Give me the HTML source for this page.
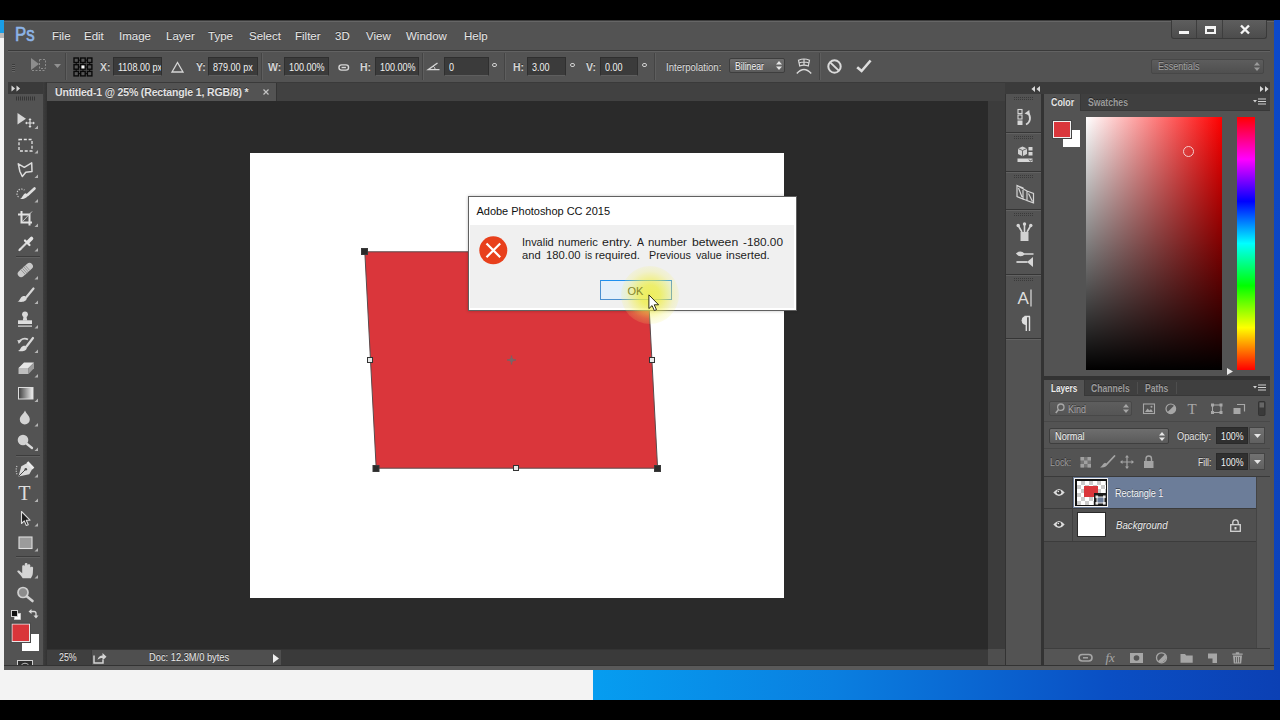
<!DOCTYPE html>
<html>
<head>
<meta charset="utf-8">
<title>Photoshop</title>
<style>
*{box-sizing:border-box;margin:0;padding:0}
html,body{width:1280px;height:720px;overflow:hidden;background:#000}
body{font-family:"Liberation Sans",sans-serif;font-size:11px;color:#e4e4e4;position:relative}
.a{position:absolute}
.t{position:absolute;white-space:nowrap;line-height:14px;text-shadow:0 -1px 0 rgba(0,0,0,.45)}
.mi{font-size:11.5px;color:#e8e8e8}
.ol{font-size:10.5px;font-weight:bold;color:#d4d4d4}
.deg{position:absolute;top:62.5px;width:4.6px;height:4.6px;border:1.2px solid #cfcfcf;border-radius:50%}
.dd{background:linear-gradient(#6e6e6e,#5a5a5a);border:1px solid #3e3e3e;border-radius:2px}
.fs{display:inline-block;transform:scaleX(.86);transform-origin:0 50%}
.fld{position:absolute;background:#3b3b3b;border:1px solid #2f2f2f;border-bottom-color:#5e5e5e;height:19px;top:57px;color:#f0f0f0;line-height:18px;padding-left:4px;font-size:10.5px;white-space:nowrap;overflow:hidden}
.sep{position:absolute;top:53px;width:2px;height:27px;border-left:1px solid #444;border-right:1px solid #5e5e5e}
svg{position:absolute;overflow:visible}
</style>
</head>
<body>
<!-- desktop strips -->
<div class="a" style="left:0;top:20px;width:1280px;height:680px;background:#f3f3f3"></div>
<div class="a" style="left:0;top:20px;width:5px;height:13px;background:#1a9ee6"></div>
<div class="a" style="left:0;top:33px;width:5px;height:5px;background:#b9b9b9"></div>
<div class="a" style="left:593px;top:660px;width:687px;height:40px;background:linear-gradient(90deg,#069df0 0%,#0a7fe0 35%,#0a4fc4 75%,#0b40b4 100%)"></div>
<div class="a" style="left:1272px;top:20px;width:8px;height:650px;background:linear-gradient(#0c49ca,#0b41b8)"></div>

<!-- PS window -->
<div id="ps" class="a" style="left:4px;top:20px;width:1270px;height:650px;background:#535353"></div>

<!-- menu bar -->
<div id="menubar" class="a" style="left:4px;top:20px;width:1270px;height:30px;background:#535353"></div>
<div class="a" style="left:8px;top:50px;width:1262px;height:1px;background:#3a3a3a"></div>
<div class="a" style="left:8px;top:51px;width:1262px;height:1px;background:#626262"></div>

<div class="a" style="left:4px;top:20px;width:1270px;height:1px;background:#3c3c3c"></div>
<div class="a" style="left:4px;top:21px;width:1270px;height:1px;background:#666"></div>
<!-- menu items -->
<div class="t" style="left:14.500px;top:23px;font-size:19.500px;line-height:22px;color:#8db5e8;transform:scaleX(.86);transform-origin:0 0;-webkit-text-stroke:0.600px #8db5e8;text-shadow:none">Ps</div>
<div class="t mi" style="left:52px;top:29px">File</div>
<div class="t mi" style="left:84px;top:29px">Edit</div>
<div class="t mi" style="left:119px;top:29px">Image</div>
<div class="t mi" style="left:166px;top:29px">Layer</div>
<div class="t mi" style="left:208px;top:29px">Type</div>
<div class="t mi" style="left:249px;top:29px">Select</div>
<div class="t mi" style="left:295px;top:29px">Filter</div>
<div class="t mi" style="left:335px;top:29px">3D</div>
<div class="t mi" style="left:366px;top:29px">View</div>
<div class="t mi" style="left:406px;top:29px">Window</div>
<div class="t mi" style="left:464px;top:29px">Help</div>
<!-- window controls -->
<div class="a" style="left:1171px;top:20px;width:96px;height:19px;background:linear-gradient(#5e5e5e,#4c4c4c);border:1px solid #3a3a3a;border-top:none;border-radius:0 0 3px 3px"></div>
<div class="a" style="left:1196px;top:20px;width:1px;height:18px;background:#3e3e3e"></div>
<div class="a" style="left:1222px;top:20px;width:1px;height:18px;background:#3e3e3e"></div>
<div class="a" style="left:1179px;top:31px;width:10px;height:3px;background:#f4f4f4"></div>
<div class="a" style="left:1205px;top:26px;width:11px;height:8px;border:2px solid #f4f4f4;border-top-width:3px"></div>
<svg style="left:1240px;top:25px" width="10" height="9" viewBox="0 0 10 9"><path d="M1 0.5 L9 8.5 M9 0.5 L1 8.5" stroke="#f4f4f4" stroke-width="2.4"/></svg>

<!-- options bar -->
<div id="optbar" class="a" style="left:8px;top:52px;width:1262px;height:30px;background:#535353"></div>

<!-- options bar contents -->
<div class="a" style="left:12px;top:64px;width:3px;height:8px;background:repeating-linear-gradient(#3c3c3c 0 1px,#666 1px 2px)"></div>
<!-- tool preset dimmed -->
<svg style="left:30px;top:57px;opacity:.42" width="17" height="15" viewBox="0 0 17 15"><path d="M1 1 L1 13 L9 7 Z" fill="#ddd"/><path d="M9.5 2.5h6v9h-6z" fill="none" stroke="#ddd" stroke-width="1" stroke-dasharray="2 1.5"/><path d="M2 13.5h13" stroke="#ddd" stroke-width="1" stroke-dasharray="2 1.5"/></svg>
<svg style="left:54px;top:64px;opacity:.45" width="7" height="4" viewBox="0 0 7 4"><path d="M0 0h7L3.5 4z" fill="#ddd"/></svg>
<div class="sep" style="left:65px"></div>
<!-- reference point grid -->
<svg style="left:73px;top:57px" width="20" height="20" viewBox="0 0 20 20">
<g fill="#555" stroke="#0a0a0a" stroke-width="1.4">
<rect x="1" y="1" width="4.5" height="4.5"/><rect x="7.7" y="1" width="4.5" height="4.5"/><rect x="14.4" y="1" width="4.5" height="4.5"/>
<rect x="1" y="7.7" width="4.5" height="4.5"/><rect x="7.7" y="7.7" width="4.5" height="4.5" fill="#fff"/><rect x="14.4" y="7.7" width="4.5" height="4.5"/>
<rect x="1" y="14.4" width="4.5" height="4.5"/><rect x="7.7" y="14.4" width="4.5" height="4.5"/><rect x="14.4" y="14.4" width="4.5" height="4.5"/>
</g>
<path d="M5.5 3.2h2.2M12.2 3.2h2.2M5.5 10h2.2M12.2 10h2.2M5.5 16.6h2.2M12.2 16.6h2.2M3.2 5.5v2.2M3.2 12.2v2.2M10 5.5v2.2M10 12.2v2.2M16.6 5.5v2.2M16.6 12.2v2.2" stroke="#0a0a0a" stroke-width="1"/>
</svg>
<div class="t ol" style="left:100px;top:59.7px">X:</div>
<div class="fld" style="left:113px;width:49px"><span class="fs">1108.00 px</span></div>
<svg style="left:171px;top:61px" width="13" height="12" viewBox="0 0 13 12"><path d="M6.5 1.5 L12 11 L1 11 Z" fill="none" stroke="#d6d6d6" stroke-width="1.3"/></svg>
<div class="t ol" style="left:196px;top:59.7px">Y:</div>
<div class="fld" style="left:208px;width:50px"><span class="fs">879.00 px</span></div>
<div class="sep" style="left:261px"></div>
<div class="t ol" style="left:268px;top:59.7px">W:</div>
<div class="fld" style="left:284px;width:45px"><span class="fs">100.00%</span></div>
<svg style="left:337.500px;top:63.500px" width="11.500" height="7" viewBox="0 0 13 8"><rect x="1" y="1" width="11" height="6" rx="3" fill="none" stroke="#d6d6d6" stroke-width="1.6"/><path d="M4 4h5" stroke="#d6d6d6" stroke-width="1.6"/></svg>
<div class="t ol" style="left:360px;top:59.7px">H:</div>
<div class="fld" style="left:375px;width:44px"><span class="fs">100.00%</span></div>
<div class="sep" style="left:422px"></div>
<svg style="left:427px;top:62px" width="13" height="9" viewBox="0 0 13 9"><path d="M10.5 1 L1.2 7.6 L12.5 7.6" fill="none" stroke="#d6d6d6" stroke-width="1.3"/><path d="M6.2 4.2 Q8.2 5.6 8.2 7.6" fill="none" stroke="#d6d6d6" stroke-width="1"/></svg>
<div class="fld" style="left:444px;width:45px"><span class="fs">0</span></div>
<div class="deg" style="left:492px"></div>
<div class="sep" style="left:504px"></div>
<div class="t ol" style="left:513px;top:59.7px">H:</div>
<div class="fld" style="left:527px;width:39px"><span class="fs">3.00</span></div>
<div class="deg" style="left:570px"></div>
<div class="t ol" style="left:586px;top:59.7px">V:</div>
<div class="fld" style="left:600px;width:38px"><span class="fs">0.00</span></div>
<div class="deg" style="left:642px"></div>
<div class="sep" style="left:654px"></div>
<div class="a dd" style="left:729px;top:58px;width:56px;height:15px"></div>
<svg style="left:776px;top:61px" width="6" height="9" viewBox="0 0 6 9"><path d="M0 3.5h6L3 0zM0 5.5h6L3 9z" fill="#e6e6e6"/></svg>
<div class="t" style="left:666.0px;top:59.70px;font-size:10.5px;line-height:14px;transform:scaleX(0.911);transform-origin:0 0;color:#dedede;">Interpolation:</div>
<div class="t" style="left:735.4px;top:59.50px;font-size:10.2px;line-height:14px;transform:scaleX(0.853);transform-origin:0 0;color:#f2f2f2;">Bilinear</div>
<!-- warp icon -->
<svg style="left:796px;top:58px" width="16" height="17" viewBox="0 0 16 17"><g fill="none" stroke="#d9d9d9" stroke-width="1.2"><path d="M2.5 2.2 Q8 -0.2 13.5 2.2 L12.3 8 Q8 6.2 3.7 8 Z"/><path d="M8 1v6M3 5 Q8 3 13 5"/><path d="M0.8 15.5 Q8 7.5 15.2 15.5" stroke-width="1.5"/></g></svg>
<div class="sep" style="left:819px"></div>
<svg style="left:827px;top:59px" width="15" height="15" viewBox="0 0 15 15"><circle cx="7.5" cy="7.5" r="6.2" fill="none" stroke="#dadada" stroke-width="2"/><path d="M3.2 3.4 L11.8 11.6" stroke="#dadada" stroke-width="2"/></svg>
<svg style="left:856px;top:59px" width="16" height="14" viewBox="0 0 16 14"><path d="M1.2 8.2 L5.6 12 L14.6 1.5" fill="none" stroke="#dedede" stroke-width="2.6"/></svg>
<!-- essentials -->
<div class="a" style="left:1151px;top:59px;width:113px;height:15px;background:linear-gradient(#5d5d5d,#4f4f4f);border:1px solid #474747;border-radius:2px"></div>
<div class="t" style="left:1157.5px;top:59.50px;font-size:10.2px;line-height:14px;transform:scaleX(0.894);transform-origin:0 0;color:#a0a0a0;">Essentials</div>
<svg style="left:1254px;top:62px;opacity:.6" width="6" height="9" viewBox="0 0 6 9"><path d="M0 3.5h6L3 0zM0 5.5h6L3 9z" fill="#c8c8c8"/></svg>

<!-- tab bar -->
<div class="a" style="left:47px;top:82px;width:958px;height:19px;background:#414141"></div>
<div class="a" style="left:47px;top:82px;width:230px;height:19px;background:#535353;border-right:1px solid #343434"></div>
<div class="a" style="left:47px;top:82px;width:958px;height:1px;background:#3a3a3a"></div>

<div class="t" id="tabtitle" style="left:55px;top:85px;font-size:10.5px;font-weight:bold;color:#e2e2e2;letter-spacing:-0.15px">Untitled-1 @ 25% (Rectangle 1, RGB/8) *</div>
<svg style="left:263px;top:89px" width="6" height="6" viewBox="0 0 6 6"><path d="M0.5 0.5L5.5 5.5M5.5 0.5L0.5 5.5" stroke="#c4c4c4" stroke-width="1.2"/></svg>

<!-- canvas area -->
<div id="canvasarea" class="a" style="left:47px;top:101px;width:941px;height:548px;background:#2a2a2a"></div>
<div class="a" style="left:988px;top:101px;width:17px;height:548px;background:#3c3c3c"></div>
<div class="a" style="left:988px;top:649px;width:17px;height:17px;background:#4e4e4e"></div>

<!-- document -->
<div class="a" style="left:250px;top:153px;width:534px;height:445px;background:#fff"></div>
<svg id="shape" style="left:0;top:0" width="1280" height="720" viewBox="0 0 1280 720">
<path d="M364.800 251.800L646.200 251.800L657.600 468.200L376.200 468.200Z" fill="#da363b" stroke="#5a4a4c" stroke-width="1"/>
<!-- center crosshair -->
<path d="M507 360h9M511.500 355.500v9" stroke="#7d5e60" stroke-width="1.300"/>
<path d="M511.500 356.800l2.600 3.200-2.600 3.200-2.600-3.200z" fill="#7a6466"/>
<!-- handles -->
<g fill="#2b2b2b" stroke="#3a3a3a" stroke-width="1">
<rect x="361.500" y="248.500" width="6" height="6"/>
<rect x="373" y="465.500" width="6" height="6"/>
<rect x="654.500" y="465.500" width="6" height="6"/>
</g>
<g fill="#e8e8e8" stroke="#333" stroke-width="1">
<rect x="367.500" y="357.500" width="5" height="5"/>
<rect x="649.500" y="357.500" width="5" height="5"/>
<rect x="513.500" y="465.500" width="5" height="5"/>
</g>
</svg>

<!-- dialog -->
<div id="dlg" class="a" style="left:468px;top:196px;width:329px;height:115px;background:#fff;border:1px solid #606060;box-shadow:0 0 3px rgba(0,0,0,.25)">
 <div class="a" style="left:1px;top:28px;width:324px;height:83px;background:#f0f0f0"></div>
</div>
<div class="t" id="dtitle" style="left:476.5px;top:203px;font-size:11px;letter-spacing:-0.02px;line-height:16px;color:#111;text-shadow:none">Adobe Photoshop CC 2015</div>
<svg style="left:479px;top:235.500px" width="29" height="29" viewBox="0 0 29 29"><circle cx="14.300" cy="14.300" r="14" fill="#e8401c"/><path d="M7.500 7.500L21.200 21.200M21.200 7.500L7.500 21.200" stroke="#fff" stroke-width="2.200"/></svg>
<!-- msg -->
<div class="t" style="left:522.0px;top:236.10px;font-size:10.8px;line-height:13.25px;transform:scaleX(1.015);transform-origin:0 0;color:#1c1c1c;text-shadow:none;">Invalid</div>
<div class="t" style="left:557.6px;top:236.10px;font-size:10.8px;line-height:13.25px;transform:scaleX(1.039);transform-origin:0 0;color:#1c1c1c;text-shadow:none;">numeric</div>
<div class="t" style="left:601.9px;top:236.10px;font-size:10.8px;line-height:13.25px;transform:scaleX(1.149);transform-origin:0 0;color:#1c1c1c;text-shadow:none;">entry.</div>
<div class="t" style="left:637.0px;top:236.10px;font-size:10.8px;line-height:13.25px;transform:scaleX(0.972);transform-origin:0 0;color:#1c1c1c;text-shadow:none;">A</div>
<div class="t" style="left:648.1px;top:236.10px;font-size:10.8px;line-height:13.25px;transform:scaleX(1.060);transform-origin:0 0;color:#1c1c1c;text-shadow:none;">number</div>
<div class="t" style="left:691.9px;top:236.10px;font-size:10.8px;line-height:13.25px;transform:scaleX(1.132);transform-origin:0 0;color:#1c1c1c;text-shadow:none;">between</div>
<div class="t" style="left:742.5px;top:236.10px;font-size:10.8px;line-height:13.25px;transform:scaleX(1.092);transform-origin:0 0;color:#1c1c1c;text-shadow:none;">-180.00</div>
<div class="t" style="left:522.0px;top:249.35px;font-size:10.8px;line-height:13.25px;transform:scaleX(1.032);transform-origin:0 0;color:#1c1c1c;text-shadow:none;">and</div>
<div class="t" style="left:546.0px;top:249.35px;font-size:10.8px;line-height:13.25px;transform:scaleX(1.044);transform-origin:0 0;color:#1c1c1c;text-shadow:none;">180.00</div>
<div class="t" style="left:585.0px;top:249.35px;font-size:10.8px;line-height:13.25px;transform:scaleX(0.896);transform-origin:0 0;color:#1c1c1c;text-shadow:none;">is</div>
<div class="t" style="left:595.3px;top:249.35px;font-size:10.8px;line-height:13.25px;transform:scaleX(1.053);transform-origin:0 0;color:#1c1c1c;text-shadow:none;">required.</div>
<div class="t" style="left:648.8px;top:249.35px;font-size:10.8px;line-height:13.25px;transform:scaleX(0.996);transform-origin:0 0;color:#1c1c1c;text-shadow:none;">Previous</div>
<div class="t" style="left:695.6px;top:249.35px;font-size:10.8px;line-height:13.25px;transform:scaleX(0.994);transform-origin:0 0;color:#1c1c1c;text-shadow:none;">value</div>
<div class="t" style="left:725.6px;top:249.35px;font-size:10.8px;line-height:13.25px;transform:scaleX(1.057);transform-origin:0 0;color:#1c1c1c;text-shadow:none;">inserted.</div>
<!-- /msg -->
<div class="a" style="left:600px;top:280px;width:72px;height:20px;background:#e3effa;border:1px solid #4a8fd0;border-top-color:#1e90f0"></div>
<!-- yellow highlight -->
<div class="a" style="left:620.500px;top:265.500px;width:58px;height:58px;border-radius:50%;background:radial-gradient(circle,rgba(240,238,60,.82) 0%,rgba(240,238,64,.76) 24%,rgba(242,240,80,.52) 42%,rgba(244,242,100,.26) 58%,rgba(245,242,120,.1) 75%,rgba(245,242,120,.03) 90%,rgba(245,242,120,0) 100%)"></div>
<div class="t" id="okt" style="left:627.500px;top:283.500px;font-size:11px;line-height:14px;color:#85852a;text-shadow:none">OK</div>
<!-- cursor -->
<svg style="left:648px;top:293.500px" width="11.500" height="17.700" viewBox="0 0 13 20"><path d="M1 1v15.500l3.600-3.400 2.600 5.700 2.400-1.100-2.600-5.500h5z" fill="#fff" stroke="#2a2a10" stroke-width="1.100" stroke-linejoin="round"/></svg>

<!-- status bar -->
<div id="status" class="a" style="left:47px;top:649px;width:941px;height:17px;background:#3a3a3a"></div>
<div class="a" style="left:47px;top:649px;width:44px;height:17px;background:#3f3f3f"></div>
<div class="a" style="left:91px;top:649px;width:190px;height:17px;background:#4f4f4f"></div>

<!-- status contents -->
<div class="t" style="left:58.7px;top:650.50px;font-size:10px;line-height:14px;transform:scaleX(0.884);transform-origin:0 0;color:#e8e8e8;">25%</div>
<div class="t" style="left:148.9px;top:650.50px;font-size:10px;line-height:14px;transform:scaleX(0.930);transform-origin:0 0;color:#e8e8e8;">Doc: 12.3M/0 bytes</div>
<div class="a" style="left:47px;top:649px;width:941px;height:1px;background:#333"></div>
<div class="a" style="left:91px;top:650px;width:1px;height:15px;background:#3a3a3a"></div>
<svg style="left:93px;top:652px" width="14" height="12" viewBox="0 0 14 12"><path d="M1 3.500v7.500h9v-3" fill="none" stroke="#d4d4d4" stroke-width="1.500"/><path d="M4.500 8c0.500-3 2.500-4.500 5-4.500v-2.500l4 3.800-4 3.700v-2.500c-2 0-3.500 0.500-5 2z" fill="#d4d4d4"/></svg>
<svg style="left:272.500px;top:653.500px" width="6" height="9" viewBox="0 0 6 9"><path d="M0 0l6 4.500-6 4.500z" fill="#f0f0f0"/></svg>
<div class="a" style="left:47px;top:649px;width:238px;height:17px;background:transparent"></div>

<!-- toolbar -->
<div id="toolbar" class="a" style="left:8px;top:82px;width:38px;height:584px;background:#535353"></div>
<div class="a" style="left:46px;top:82px;width:1px;height:584px;background:#383838"></div>

<!-- toolbar contents -->
<div class="a" style="left:8px;top:82px;width:36px;height:12px;background:#3a3a3a"></div>
<div class="a" style="left:43px;top:82px;width:4px;height:584px;background:linear-gradient(90deg,#3e3e3e,#333)"></div>
<svg id="tools" style="left:0;top:0" width="1280" height="720" viewBox="0 0 1280 720">
<defs>
<linearGradient id="gg" x1="0" x2="1" y1="0" y2="0"><stop offset="0" stop-color="#3c3c3c"/><stop offset="1" stop-color="#f2f2f2"/></linearGradient>
</defs>
<!-- double arrows -->
<path d="M11.5 85.5l3.6 3-3.6 3zM16.5 85.5l3.6 3-3.6 3z" fill="#d8d8d8"/>
<!-- grip -->
<g stroke="#363636" stroke-width="1"><path d="M16.5 96.5v4M18.5 96.5v4M20.5 96.5v4M22.5 96.5v4M24.5 96.5v4M26.5 96.5v4M28.5 96.5v4M30.5 96.5v4M32.5 96.5v4M34.5 96.5v4"/></g>
<!-- corner triangles -->
<g fill="#b4b4b4">
<path d="M38 125.5v3.5h-3.5z"/><path d="M38 150v3.5h-3.5z"/><path d="M38 174.500v3.500h-3.500z"/><path d="M38 199v3.500h-3.500z"/><path d="M38 223.500v3.500h-3.500z"/><path d="M38 248v3.500h-3.500z"/>
<path d="M38 276v3.500h-3.500z"/><path d="M38 300.500v3.500h-3.500z"/><path d="M38 325v3.500h-3.500z"/><path d="M38 349.500v3.500h-3.500z"/><path d="M38 374v3.500h-3.500z"/><path d="M38 398.500v3.500h-3.500z"/>
<path d="M38 423v3.500h-3.500z"/><path d="M38 447.500v3.500h-3.500z"/><path d="M38 474v3.500h-3.500z"/><path d="M38 498.500v3.500h-3.500z"/><path d="M38 523v3.500h-3.500z"/><path d="M38 548v3.500h-3.500z"/><path d="M38 575v3.500h-3.500z"/>
</g>
<!-- separators -->
<g stroke="#3c3c3c" stroke-width="1"><path d="M16 256.500h24M16 455.500h24M16 556.500h24"/></g>
<g stroke="#606060" stroke-width="1"><path d="M16 257.500h24M16 456.500h24M16 557.500h24"/></g>
<!-- 1 move -->
<path d="M17.500 113v11.500l8.500-5.700z" fill="#d6d6d6"/>
<path d="M26 123h8M30 119v8" stroke="#e0e0e0" stroke-width="1.200"/>
<path d="M30 118l1.600 2h-3.200zM30 128l1.600-2h-3.200zM25 123l2-1.600v3.200zM35 123l-2-1.600v3.200z" fill="#e0e0e0"/>
<!-- 2 marquee -->
<rect x="19" y="139.500" width="13" height="11.500" fill="none" stroke="#e4e4e4" stroke-width="1.300" stroke-dasharray="3 1.800"/>
<!-- 3 poly lasso -->
<path d="M18.300 163.800L24.300 167.300L31.700 162.800L32 171.500L25.800 172.200L22.300 176.500L19.800 171.200Z" fill="none" stroke="#dcdcdc" stroke-width="1.500" stroke-linejoin="round"/>
<!-- 4 quick select -->
<path d="M34.500 188.500L27.500 195" stroke="#dedede" stroke-width="2.600" stroke-linecap="round"/>
<path d="M28 194.500c-0.500 3-3.500 5-8 4.500c2.500-1 2.500-4.500 5.500-5.800z" fill="#e0e0e0"/>
<path d="M18.500 197a4.500 4.500 0 0 1 6-6.800" fill="none" stroke="#d0d0d0" stroke-width="1.100" stroke-dasharray="1.300 1.300"/>
<!-- 5 crop -->
<path d="M21.500 211v11.500H32M18 214.500h11.500V225.500" fill="none" stroke="#e2e2e2" stroke-width="2"/>
<path d="M22.500 221.500L32 211.500" stroke="#cfcfcf" stroke-width="0.900"/>
<!-- 6 eyedropper -->
<path d="M26.500 243L19.500 250" stroke="#d8d8d8" stroke-width="2.200" stroke-linecap="round"/>
<path d="M18.500 251l1.500-3 1.500 1.500z" fill="#e6e6e6"/>
<path d="M25 240.500l4.500 4.500" stroke="#e4e4e4" stroke-width="2.200" stroke-linecap="round"/>
<path d="M28 242L31.500 238.500" stroke="#e4e4e4" stroke-width="3.600" stroke-linecap="round"/>
<!-- 7 healing -->
<g transform="rotate(-42 25.300 270)"><rect x="16.300" y="266.600" width="18" height="6.800" rx="3.400" fill="#c9c9c9"/><path d="M22.300 266.600v6.800M24.300 266.600v6.800M26.300 266.600v6.800M28.300 266.600v6.800" stroke="#8a8a8a" stroke-width="0.800"/></g>
<!-- 8 brush -->
<path d="M33.500 288.500L26.500 297" stroke="#d6d6d6" stroke-width="2.200" stroke-linecap="round"/>
<path d="M26.800 297.800c0.200 3.600-4.300 5-9.300 3.700c2-0.600 2.200-2.200 3.200-3.600c1.300-1.800 3.600-2.400 4.800-1.500z" fill="#dadada"/>
<!-- 9 stamp -->
<circle cx="25" cy="314.300" r="2.900" fill="#dadada"/>
<path d="M23.600 316h2.800l0.800 4.500h-4.400z" fill="#dadada"/>
<rect x="18" y="320.300" width="14" height="3.700" fill="#dedede"/>
<rect x="18" y="325.500" width="14" height="1.200" fill="#dedede"/>
<!-- 10 history brush -->
<path d="M33 338L26.500 346.500" stroke="#d8d8d8" stroke-width="2.200" stroke-linecap="round"/>
<path d="M26.800 347.300c0.200 3.400-4 4.800-8.800 3.600c2-0.600 2.200-2.100 3.100-3.400c1.200-1.700 3.400-2.300 4.500-1.500z" fill="#dcdcdc"/>
<path d="M19 342.500c1-3.500 5.500-5 9-3" fill="none" stroke="#d4d4d4" stroke-width="1.700"/>
<path d="M17.300 340l4.500 0.500-3 3.500z" fill="#d4d4d4"/>
<!-- 11 eraser -->
<path d="M24 362.500h10l-5.500 5.500h-10z" fill="#e6e6e6"/>
<path d="M18.500 368h10v6h-10z" fill="#bdbdbd"/>
<path d="M28.500 368l5.500-5.500v5.800l-5.500 5.700z" fill="#9c9c9c"/>
<!-- 12 gradient -->
<rect x="18.500" y="387.500" width="14.500" height="11.500" fill="url(#gg)" stroke="#dcdcdc" stroke-width="1"/>
<!-- 13 blur drop -->
<path d="M25 410.500c1.500 3.500 4.800 5.500 4.800 9a5 5 0 0 1-10 0c0-3.500 3.700-5.500 5.200-9z" fill="#d4d4d4"/>
<!-- 14 dodge -->
<circle cx="23" cy="440" r="5.300" fill="#d2d2d2"/>
<path d="M27 444L32 448" stroke="#dadada" stroke-width="2.300" stroke-linecap="round"/>
<!-- 15 pen -->
<path d="M18.500 476.500L21.300 466.300L27.300 463L32.500 468.500L29.300 474.300Z" fill="#dcdcdc"/>
<path d="M28.300 461.300l6 6.300-1.800 1.800-6-6.300z" fill="#ececec"/>
<path d="M19 476L25.500 469.500" stroke="#4a4a4a" stroke-width="1"/>
<circle cx="25.800" cy="469.200" r="1.300" fill="#4a4a4a"/>
<path d="M17 466c-1.200 3-1 6 0.300 9" fill="none" stroke="#d0d0d0" stroke-width="1.100" stroke-dasharray="1.200 1.200"/>
<!-- 16 type -->
<text x="18.300" y="500" font-family="Liberation Serif" font-size="20" fill="#dedede">T</text>
<!-- 17 path select -->
<path d="M21.500 511.500v12l2.800-2.600 2 4.600 2-0.800-2-4.500h3.700z" fill="#1c1c1c" stroke="#dadada" stroke-width="1.100" stroke-linejoin="round"/>
<!-- 18 rectangle -->
<rect x="19" y="537" width="13" height="11.500" fill="#9b9b9b" stroke="#dedede" stroke-width="1.100"/>
<!-- 19 hand -->
<path transform="translate(-4.600,0) scale(1.270,1)" d="M21.500 578.300c-1-2.500-3-4.500-4.200-6.500c-0.400-1 0.800-1.800 1.800-0.800l2 2.200v-7c0-1.400 2-1.400 2 0v-2c0-1.500 2.200-1.500 2.200 0v1.200c0-1.500 2.200-1.500 2.200 0v2.200c0.200-1.300 2.200-1.300 2.200 0.200l-0.200 5c0 2.500-1 4-1.500 5.500z" fill="#d4d4d4"/>
<!-- 20 zoom -->
<circle cx="23" cy="592.500" r="5" fill="#8c8c8c" stroke="#cfcfcf" stroke-width="1.700"/>
<path d="M27 596.500L32.500 601" stroke="#d2d2d2" stroke-width="2.600" stroke-linecap="round"/>
<!-- default colors -->
<rect x="14.500" y="613.500" width="6" height="6" fill="#fff" stroke="#d0d0d0" stroke-width="0.800"/>
<rect x="11.500" y="610.500" width="6" height="6" fill="#111" stroke="#d0d0d0" stroke-width="1"/>
<!-- swap -->
<path d="M30.500 611.500h3.500a2 2 0 0 1 2 2v3" fill="none" stroke="#dadada" stroke-width="1.300"/>
<path d="M28.500 611.500l3-2.500v5zM36 618.500l-2.500-3h5z" fill="#dadada"/>
<!-- fg/bg -->
<rect x="22" y="634" width="17" height="17" fill="#ffffff"/>
<rect x="12" y="624" width="17.500" height="17.500" fill="#d9353a" stroke="#e8e8e8" stroke-width="1"/>
<rect x="11" y="623" width="19.500" height="19.500" fill="none" stroke="#4a4a4a" stroke-width="1"/>
<!-- quick mask -->
<rect x="17.500" y="660.500" width="15" height="6" fill="#2e2e2e" stroke="#d0d0d0" stroke-width="1"/>
<path d="M21 665.500c2-3 6-3 8 0" fill="none" stroke="#bdbdbd" stroke-width="1"/>
</svg>

<!-- right icon strip -->
<div class="a" style="left:1005px;top:82px;width:265px;height:12px;background:#3b3b3b"></div>
<div id="ricons" class="a" style="left:1006px;top:94px;width:35px;height:572px;background:#535353"></div>
<div class="a" style="left:1005px;top:94px;width:1px;height:572px;background:#333"></div>
<div class="a" style="left:1041px;top:94px;width:3px;height:572px;background:#333"></div>

<!-- right panels -->
<div id="rpanels" class="a" style="left:1044px;top:94px;width:226px;height:572px;background:#535353"></div>

<!-- right strip icons -->
<svg style="left:0;top:0" width="1280" height="720" viewBox="0 0 1280 720">
<g stroke="#353535" stroke-width="1"><path d="M1006 132.500h35M1006 171.500h35M1006 209.500h35M1006 274.500h35M1006 338.500h35"/></g>
<g stroke="#626262" stroke-width="1"><path d="M1006 133.500h35M1006 172.500h35M1006 210.500h35M1006 275.500h35M1006 339.500h35"/></g>
<path d="M1014 97.5h19M1014 99.5h19" stroke="#3a3a3a" stroke-width="1" stroke-dasharray="1 1"/><path d="M1014 136.5h19M1014 138.5h19" stroke="#3a3a3a" stroke-width="1" stroke-dasharray="1 1"/><path d="M1014 175.5h19M1014 177.5h19" stroke="#3a3a3a" stroke-width="1" stroke-dasharray="1 1"/><path d="M1014 213.5h19M1014 215.5h19" stroke="#3a3a3a" stroke-width="1" stroke-dasharray="1 1"/><path d="M1014 278.5h19M1014 280.5h19" stroke="#3a3a3a" stroke-width="1" stroke-dasharray="1 1"/>
<!-- history -->
<g fill="none" stroke="#d6d6d6" stroke-width="1.100"><rect x="1018" y="109.500" width="4" height="4"/><rect x="1018" y="115" width="4" height="4"/></g>
<rect x="1017.500" y="120.500" width="5" height="4.500" fill="#d6d6d6"/>
<path d="M1026 124.500c4.500-2 5.500-8 1.500-12" fill="none" stroke="#d6d6d6" stroke-width="1.800"/>
<path d="M1024.500 113.500l4.800-3.500 0.500 5.500z" fill="#d6d6d6"/>
<!-- properties/3d -->
<path d="M1022.500 146.500l4.500 2v5.500l-4.500 2.300-4.500-2.300v-5.500z" fill="#d0d0d0"/><path d="M1018 148.500l4.500 2 4.500-2M1022.500 150.500v5.500" stroke="#5a5a5a" stroke-width="0.900" fill="none"/>
<rect x="1028.500" y="147" width="4" height="3.500" fill="#d6d6d6"/><rect x="1028.500" y="152" width="4" height="3.500" fill="#d6d6d6"/>
<rect x="1017.500" y="158.500" width="15" height="3.500" fill="#d6d6d6"/><path d="M1029 159.500l1.500 1.800 1.500-1.800" stroke="#444" stroke-width="0.900" fill="none"/>
<!-- 3d planes -->
<g fill="none" stroke="#d4d4d4" stroke-width="1.200"><path d="M1017 185.500l6 2.500v11l-6-2.500zM1027 191l6.500 2.500v9.500l-6.500-2.500zM1017 185.500l10 5.500M1023 199l10.500 4M1018.500 188l3.500 9M1028.500 193.500l4 8"/></g>
<!-- brush presets -->
<rect x="1020.500" y="232" width="8" height="9" fill="#d2d2d2"/>
<path d="M1022 232l-3.500-6M1024.500 232v-7.500M1027 232l3.500-6" stroke="#d6d6d6" stroke-width="1.600"/>
<circle cx="1018.200" cy="225.500" r="1.700" fill="#d6d6d6"/><circle cx="1024.500" cy="224" r="1.700" fill="#d6d6d6"/><circle cx="1030.800" cy="225.500" r="1.700" fill="#d6d6d6"/>
<!-- brush -->
<path d="M1017 253.500c2-1.500 5-1.500 7 0.500c-2 2.300-5 2-7-0.500zM1024 254h9.500" fill="#d6d6d6" stroke="#d6d6d6" stroke-width="1.500"/>
<path d="M1016.500 262h11" stroke="#d6d6d6" stroke-width="1.800"/><path d="M1027 262l6-5v10z" fill="#d6d6d6"/>
<!-- A| -->
<text x="1017.500" y="304" font-family="Liberation Sans" font-size="17" fill="#dedede">A</text><path d="M1031 289.500v17" stroke="#dedede" stroke-width="1.200"/>
<!-- pilcrow -->
<path d="M1024.500 316.500h5.500M1026.300 316.500v14.500M1029.500 316.500v14.500" stroke="#dedede" stroke-width="1.400" fill="none"/><path d="M1026 316.500a4 4 0 0 0 0 8z" fill="#dedede" stroke="#dedede" stroke-width="1"/>
</svg>

<!-- right panel contents -->
<svg style="left:1030.500px;top:85.500px" width="9" height="6" viewBox="0 0 9 6"><path d="M4 0v6l-3.600-3zM9 0v6l-3.600-3z" fill="#d8d8d8"/></svg>
<svg style="left:1259.500px;top:85.500px" width="9" height="6" viewBox="0 0 9 6"><path d="M0 0v6l3.600-3zM5 0v6l3.600-3z" fill="#d8d8d8"/></svg>
<!-- color panel -->
<div class="a" style="left:1044px;top:94px;width:226px;height:16px;background:#3f3f3f"></div>
<div class="a" style="left:1044px;top:94px;width:37px;height:17px;background:#535353;border-right:1px solid #383838"></div>
<div class="a" style="left:1081px;top:110px;width:189px;height:1px;background:#383838"></div>
<svg style="left:1253px;top:98px" width="13" height="8" viewBox="0 0 13 8"><path d="M0 2h4L2 4.500z" fill="#d0d0d0"/><path d="M5 1h8M5 3.500h8M5 6h8" stroke="#d0d0d0" stroke-width="1.200"/></svg>
<div class="a" style="left:1063px;top:130px;width:17px;height:17px;background:#fff"></div>
<div class="a" style="left:1052px;top:120px;width:20px;height:19px;border:1px solid #444"></div>
<div class="a" style="left:1053px;top:121px;width:18px;height:17px;background:#da363b;border:1px solid #f0f0f0"></div>
<div class="a" style="left:1086px;top:117px;width:136px;height:253px;background:linear-gradient(to top,#000,rgba(0,0,0,0)),linear-gradient(to right,#fff,#ff0000)"></div>
<div class="a" style="left:1237px;top:117px;width:18px;height:253px;background:linear-gradient(#ff0000 0%,#ff00ff 16.7%,#0000ff 33.3%,#00ffff 50%,#00ff00 66.7%,#ffff00 83.3%,#ff0000 100%)"></div>
<div class="a" style="left:1183px;top:146px;width:11px;height:11px;border:1.300px solid #f4d0d0;border-radius:50%"></div>
<svg style="left:1227px;top:368px" width="6" height="7" viewBox="0 0 6 7"><path d="M0 0l6 3.500-6 3.500z" fill="#e8e8e8"/></svg>
<!-- gap -->
<div class="a" style="left:1044px;top:376px;width:226px;height:4px;background:#333"></div>
<!-- layers panel -->
<div class="a" style="left:1044px;top:380px;width:226px;height:15px;background:#3f3f3f"></div>
<div class="a" style="left:1044px;top:380px;width:41px;height:16px;background:#535353;border-right:1px solid #383838"></div>
<div class="a" style="left:1085px;top:395px;width:185px;height:1px;background:#383838"></div>
<div class="a" style="left:1137px;top:382px;width:1px;height:12px;background:#4e4e4e"></div>
<div class="a" style="left:1176px;top:382px;width:1px;height:12px;background:#4e4e4e"></div>
<svg style="left:1253px;top:384px" width="13" height="8" viewBox="0 0 13 8"><path d="M0 2h4L2 4.500z" fill="#d0d0d0"/><path d="M5 1h8M5 3.500h8M5 6h8" stroke="#d0d0d0" stroke-width="1.200"/></svg>
<!-- filter row -->
<div class="a" style="left:1049px;top:401px;width:83px;height:15px;background:linear-gradient(#5e5e5e,#555);border:1px solid #484848;border-radius:2px"></div>
<svg style="left:1055px;top:403px" width="10" height="11" viewBox="0 0 10 11"><circle cx="5.800" cy="4.200" r="3.200" fill="none" stroke="#a8a8a8" stroke-width="1.300"/><path d="M3.500 6.500L0.800 10" stroke="#a8a8a8" stroke-width="1.500"/></svg>
<svg style="left:1123px;top:404px;opacity:.7" width="6" height="9" viewBox="0 0 6 9"><path d="M0 3.500h6L3 0zM0 5.500h6L3 9z" fill="#c8c8c8"/></svg>
<svg style="left:0;top:0" width="1280" height="720" viewBox="0 0 1280 720">
<g opacity=".75">
<rect x="1143.500" y="404" width="11" height="9.500" fill="none" stroke="#c4c4c4" stroke-width="1.100"/><path d="M1145 412l2.500-3.500 2 2 1.500-1.500 2 3z" fill="#c4c4c4"/><circle cx="1151.500" cy="406.800" r="1" fill="#c4c4c4"/>
<circle cx="1170.800" cy="408.800" r="4.800" fill="none" stroke="#c4c4c4" stroke-width="1.200"/><path d="M1167.400 412.200a4.800 4.800 0 0 0 6.800-6.800z" fill="#c4c4c4"/>
<text x="1187.500" y="414" font-family="Liberation Serif" font-size="15" fill="#c4c4c4">T</text>
<rect x="1212.500" y="405" width="8.500" height="7.500" fill="none" stroke="#c4c4c4" stroke-width="1.100"/><g fill="#c4c4c4"><rect x="1211" y="403.500" width="3" height="3"/><rect x="1219.500" y="403.500" width="3" height="3"/><rect x="1211" y="411" width="3" height="3"/><rect x="1219.500" y="411" width="3" height="3"/></g>
<rect x="1233.500" y="408" width="7" height="6" fill="#c4c4c4"/><path d="M1237 404.500h7.500v7" fill="none" stroke="#c4c4c4" stroke-width="1.200"/>
</g>
<rect x="1258.500" y="401.500" width="6.500" height="14" rx="1" fill="#3a3a3a" stroke="#333"/><rect x="1259.500" y="402.500" width="4.500" height="5" fill="#666"/>
<!-- lock icons -->
<g opacity=".62">
<g fill="#d0d0d0"><rect x="1080.500" y="457" width="10.500" height="10.500" fill="#8a8a8a"/><rect x="1080.500" y="457" width="3.500" height="3.500"/><rect x="1087.500" y="457" width="3.500" height="3.500"/><rect x="1084" y="460.500" width="3.500" height="3.500"/><rect x="1080.500" y="464" width="3.500" height="3.500"/><rect x="1087.500" y="464" width="3.500" height="3.500"/></g>
<path d="M1114.500 456L1107 464" stroke="#d6d6d6" stroke-width="1.800" stroke-linecap="round"/><path d="M1107.500 464c-0.500 2.500-3.500 4-7.500 3.300c2-0.800 2.500-3.300 5-4.500z" fill="#d6d6d6"/>
<path d="M1121.500 462h11M1127 456.500v11" stroke="#d6d6d6" stroke-width="1.200"/><path d="M1127 455l2 2.500h-4zM1127 469l2-2.500h-4zM1120 462l2.500-2v4zM1134 462l-2.500-2v4z" fill="#d6d6d6"/>
<rect x="1144" y="461" width="9.500" height="7" fill="#d6d6d6"/><path d="M1146 461v-2.200a2.750 2.750 0 0 1 5.500 0v2.200" fill="none" stroke="#d6d6d6" stroke-width="1.400"/>
</g>
</svg>
<div class="a" style="left:1044px;top:421px;width:226px;height:1px;background:#484848"></div>
<!-- blend row -->
<div class="a dd" style="left:1049px;top:428px;width:120px;height:16px"></div>
<svg style="left:1159px;top:431.500px" width="6" height="9" viewBox="0 0 6 9"><path d="M0 3.500h6L3 0zM0 5.500h6L3 9z" fill="#e6e6e6"/></svg>
<div class="a" style="left:1216px;top:427px;width:32px;height:17px;background:#303030;border:1px solid #2a2a2a"></div>
<div class="a" style="left:1249px;top:427px;width:16px;height:17px;background:linear-gradient(#727272,#606060);border:1px solid #444"></div>
<svg style="left:1253.500px;top:434px" width="7" height="4" viewBox="0 0 7 4"><path d="M0 0h7L3.500 4z" fill="#e6e6e6"/></svg>
<div class="a" style="left:1044px;top:448px;width:226px;height:1px;background:#484848"></div>
<!-- lock row -->
<div class="a" style="left:1216px;top:453px;width:32px;height:17px;background:#303030;border:1px solid #2a2a2a"></div>
<div class="a" style="left:1249px;top:453px;width:16px;height:17px;background:linear-gradient(#727272,#606060);border:1px solid #444"></div>
<svg style="left:1253.500px;top:460px" width="7" height="4" viewBox="0 0 7 4"><path d="M0 0h7L3.500 4z" fill="#e6e6e6"/></svg>
<!-- layer list -->
<div class="a" style="left:1044px;top:476px;width:212px;height:172px;background:#4a4a4a"></div>
<div class="a" style="left:1044px;top:476px;width:226px;height:1px;background:#3a3a3a"></div>
<div class="a" style="left:1044px;top:477px;width:28px;height:64px;background:#505050"></div>
<div class="a" style="left:1072px;top:477px;width:184px;height:31px;background:#6c7d99"></div>
<div class="a" style="left:1072px;top:509px;width:184px;height:32px;background:#505050"></div>
<div class="a" style="left:1044px;top:508px;width:212px;height:1px;background:#3c3c3c"></div>
<div class="a" style="left:1044px;top:541px;width:212px;height:1px;background:#3c3c3c"></div>
<div class="a" style="left:1072px;top:477px;width:1px;height:64px;background:#404040"></div>
<div class="a" style="left:1256px;top:477px;width:14px;height:171px;background:#555;border-left:1px solid #444"></div>
<!-- thumbs -->
<div class="a" style="left:1074px;top:478px;width:34px;height:29px;border:1px solid #f2f2f2;background:#111"></div>
<div class="a" style="left:1076.500px;top:480.500px;width:29px;height:24px;background-color:#fff;background-image:linear-gradient(45deg,#ccc 25%,transparent 25%,transparent 75%,#ccc 75%),linear-gradient(45deg,#ccc 25%,transparent 25%,transparent 75%,#ccc 75%);background-size:8px 8px;background-position:0 0,4px 4px"></div>
<div class="a" style="left:1083.500px;top:485.500px;width:14.500px;height:11px;background:#da363b"></div>
<div class="a" style="left:1093.500px;top:493px;width:13px;height:12px;background:#1a1a1a"></div>
<svg style="left:1095px;top:494.500px" width="11" height="10" viewBox="0 0 11 10"><rect x="2" y="2" width="7" height="6" fill="#6c7d99" stroke="#e8e8e8" stroke-width="1"/><g fill="#e8e8e8"><rect x="0.500" y="0.500" width="2.600" height="2.600"/><rect x="8" y="0.500" width="2.600" height="2.600"/><rect x="0.500" y="7" width="2.600" height="2.600"/><rect x="8" y="7" width="2.600" height="2.600"/></g></svg>
<div class="a" style="left:1076.500px;top:512px;width:29.500px;height:24.500px;background:#fff;border:1px solid #2a2a2a"></div>
<!-- eyes -->
<svg style="left:1052.500px;top:487.500px" width="12" height="9" viewBox="0 0 12 9"><path d="M0.300 4.500Q6 -2.500 11.700 4.500Q6 11.500 0.300 4.500Z" fill="#dcdcdc"/><circle cx="6" cy="4.200" r="2.300" fill="#444"/><circle cx="5.300" cy="3.500" r="0.800" fill="#eee"/></svg>
<svg style="left:1052.500px;top:519.500px" width="12" height="9" viewBox="0 0 12 9"><path d="M0.300 4.500Q6 -2.500 11.700 4.500Q6 11.500 0.300 4.500Z" fill="#dcdcdc"/><circle cx="6" cy="4.200" r="2.300" fill="#444"/><circle cx="5.300" cy="3.500" r="0.800" fill="#eee"/></svg>
<!-- bg lock -->
<svg style="left:1229.500px;top:518.500px" width="11" height="13" viewBox="0 0 11 13"><rect x="0.700" y="5.700" width="9.600" height="6.600" fill="none" stroke="#d4d4d4" stroke-width="1.300"/><path d="M2.800 5.500v-2a2.700 2.700 0 0 1 5.400 0v2" fill="none" stroke="#d4d4d4" stroke-width="1.300"/><rect x="4.500" y="8" width="2" height="2.500" fill="#d4d4d4"/></svg>
<!-- bottom icons -->
<div class="a" style="left:1044px;top:648px;width:226px;height:17px;background:#555;border-top:1px solid #3e3e3e"></div>
<svg style="left:0;top:0" width="1280" height="720" viewBox="0 0 1280 720"><g opacity=".6">
<rect x="1079" y="654.500" width="13" height="6.500" rx="3.250" fill="none" stroke="#dcdcdc" stroke-width="1.600"/><path d="M1083 657.800h5" stroke="#dcdcdc" stroke-width="1.500"/>
<text x="1105.500" y="662" font-family="Liberation Serif" font-style="italic" font-size="13" fill="#dcdcdc">fx</text>
<rect x="1130" y="653" width="13" height="10" fill="#dcdcdc"/><circle cx="1136.500" cy="658" r="2.800" fill="#555"/>
<circle cx="1161.500" cy="657.800" r="5" fill="none" stroke="#dcdcdc" stroke-width="1.300"/><path d="M1158 661.300a5 5 0 0 0 7-7z" fill="#dcdcdc"/>
<path d="M1180.500 654h4.500l1.200 1.500h6.500v7.300h-12.200z" fill="#dcdcdc"/>
<path d="M1208 653.500h9v9.500h-4.500v-4.500h-4.500z" fill="#dcdcdc"/>
<path d="M1233 655.500h9l-0.800 8h-7.400z" fill="#dcdcdc"/><path d="M1232.300 654.200h10.400M1235.800 653h3.400" stroke="#dcdcdc" stroke-width="1.300"/><path d="M1235.500 657v5.500M1237.500 657v5.500M1239.500 657v5.500" stroke="#555" stroke-width="0.800"/>
</g></svg>
<div class="t" style="left:1050.7px;top:95.00px;font-size:10.5px;line-height:14px;transform:scaleX(0.842);transform-origin:0 0;font-weight:bold;color:#e6e6e6;">Color</div>
<div class="t" style="left:1087.8px;top:95.00px;font-size:10.5px;line-height:14px;transform:scaleX(0.826);transform-origin:0 0;font-weight:bold;color:#9c9c9c;">Swatches</div>
<div class="t" style="left:1050.7px;top:381.00px;font-size:10.5px;line-height:14px;transform:scaleX(0.777);transform-origin:0 0;font-weight:bold;color:#ececec;">Layers</div>
<div class="t" style="left:1091.0px;top:381.00px;font-size:10.5px;line-height:14px;transform:scaleX(0.819);transform-origin:0 0;font-weight:bold;color:#9c9c9c;">Channels</div>
<div class="t" style="left:1144.7px;top:381.00px;font-size:10.5px;line-height:14px;transform:scaleX(0.815);transform-origin:0 0;font-weight:bold;color:#9c9c9c;">Paths</div>
<div class="t" style="left:1068.0px;top:401.50px;font-size:10.5px;line-height:14px;transform:scaleX(0.857);transform-origin:0 0;color:#a6a6a6;">Kind</div>
<div class="t" style="left:1055.4px;top:428.50px;font-size:10.5px;line-height:14px;transform:scaleX(0.875);transform-origin:0 0;color:#f0f0f0;">Normal</div>
<div class="t" style="left:1177.0px;top:428.50px;font-size:10.5px;line-height:14px;transform:scaleX(0.883);transform-origin:0 0;color:#e2e2e2;">Opacity:</div>
<div class="t" style="left:1220.5px;top:428.50px;font-size:10.5px;line-height:14px;transform:scaleX(0.838);transform-origin:0 0;color:#f2f2f2;">100%</div>
<div class="t" style="left:1049.8px;top:454.50px;font-size:10.5px;line-height:14px;transform:scaleX(0.846);transform-origin:0 0;color:#9a9a9a;">Lock:</div>
<div class="t" style="left:1197.6px;top:454.50px;font-size:10.5px;line-height:14px;transform:scaleX(0.820);transform-origin:0 0;color:#e2e2e2;">Fill:</div>
<div class="t" style="left:1220.5px;top:454.50px;font-size:10.5px;line-height:14px;transform:scaleX(0.838);transform-origin:0 0;color:#f2f2f2;">100%</div>
<div class="t" style="left:1115.4px;top:485.70px;font-size:10.5px;line-height:14px;transform:scaleX(0.864);transform-origin:0 0;color:#f4f4f4;">Rectangle 1</div>
<div class="t" style="left:1116.0px;top:518.00px;font-size:10.5px;line-height:14px;transform:scaleX(0.919);transform-origin:0 0;font-style:italic;color:#ececec;">Background</div>

<!-- bottom frame -->
<div class="a" style="left:4px;top:665px;width:1270px;height:1px;background:#333"></div>
<div class="a" style="left:4px;top:666px;width:1270px;height:4px;background:#595959"></div>

</body>
</html>
